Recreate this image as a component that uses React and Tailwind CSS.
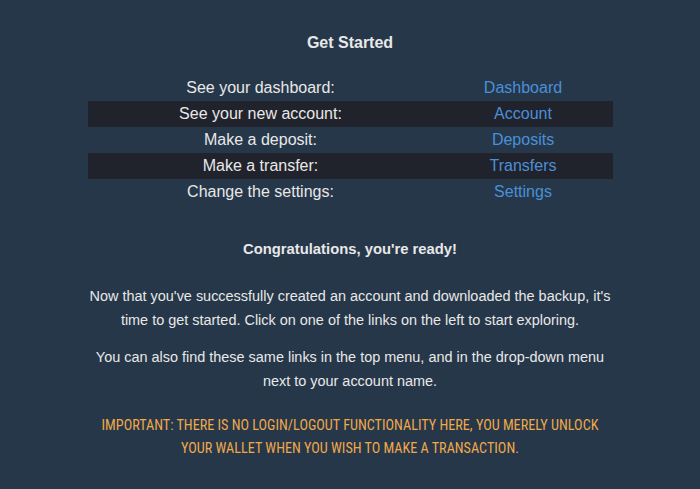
const links = [
  { label: 'See your dashboard:', link: 'Dashboard' },
  { label: 'See your new account:', link: 'Account' },
  { label: 'Make a deposit:', link: 'Deposits' },
  { label: 'Make a transfer:', link: 'Transfers' },
  { label: 'Change the settings:', link: 'Settings' },
];

export default function App() {
  return (
    <div className="min-h-screen bg-[#263749] text-[#e8e8e8] font-['Liberation_Sans',Arial,sans-serif] pt-[34px] pb-8">
      {/* Title */}
      <h2 className="text-center text-[16px] font-bold leading-[18px]">Get Started</h2>

      {/* Links table */}
      <div className="mx-auto mt-[23px] w-[525px]">
        {links.map((row, i) => (
          <div
            key={row.link}
            className={`grid grid-cols-[346px_1fr] h-[26px] items-center text-[16px] ${i % 2 === 1 ? 'bg-[#21232c]' : ''}`}
          >
            <div className="text-center">{row.label}</div>
            <a href="#" className="text-center text-[#4a90d9]">{row.link}</a>
          </div>
        ))}
      </div>

      {/* Message */}
      <div className="mx-auto mt-[35px] w-[525px] text-center">
        <h3 className="text-[14.8px] font-bold leading-[18px]">Congratulations, you're ready!</h3>
        <p className="mt-[26px] text-[14.45px] leading-[24px]">
          Now that you've successfully created an account and downloaded the backup, it's time to get started. Click on one of the links on the left to start exploring.
        </p>
        <p className="mt-[13px] text-[14.45px] leading-[24px]">
          You can also find these same links in the top menu, and in the drop-down menu next to your account name.
        </p>
        <p className="mt-[21px] text-[14.2px] leading-[23px] uppercase text-[#f0a94a] font-['Roboto_Condensed','Liberation_Sans_Narrow','DejaVu_Sans_Condensed',sans-serif]">
          Important: there is no login/logout functionality here, you merely unlock your wallet when you wish to make a transaction.
        </p>
      </div>
    </div>
  );
}
